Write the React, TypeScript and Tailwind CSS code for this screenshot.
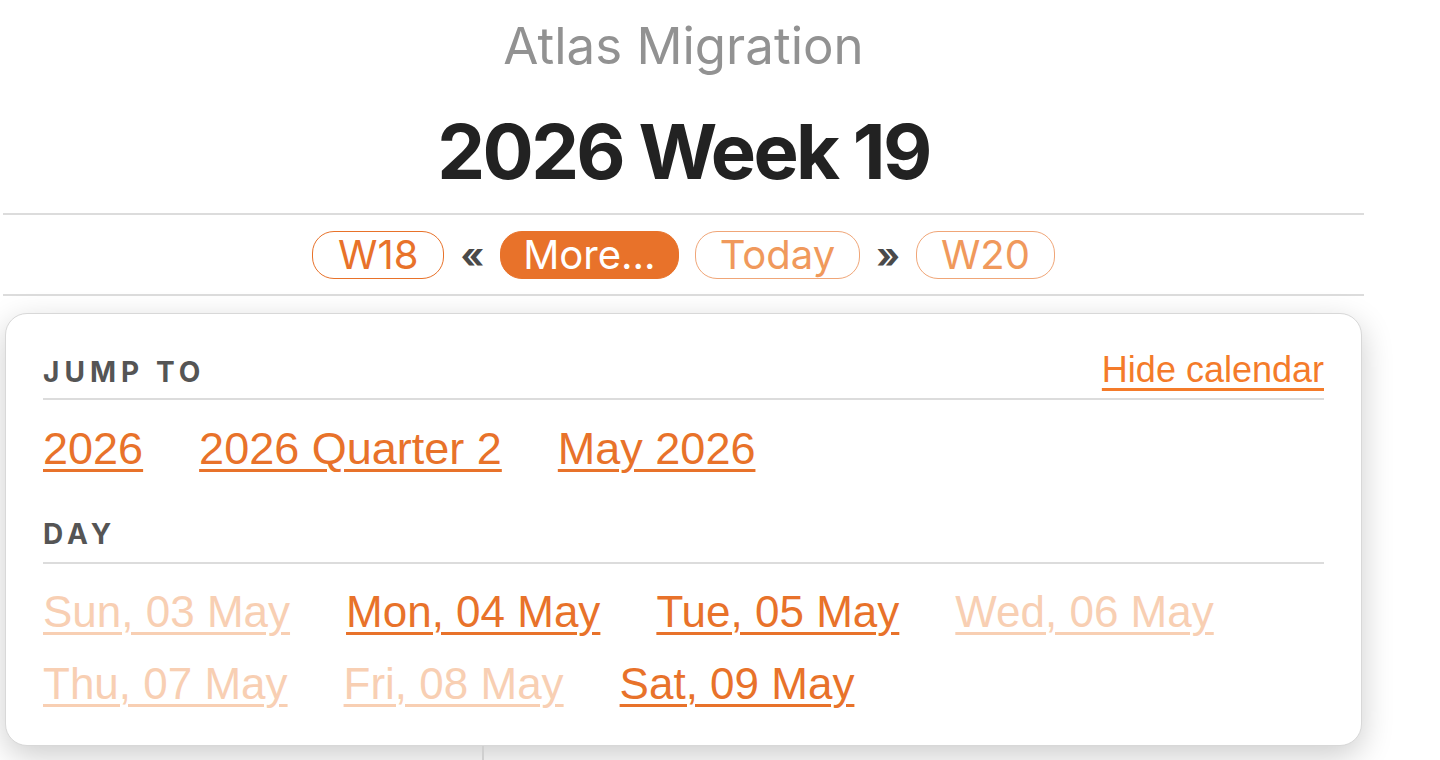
import React from "react";

const jumpLinks = ["2026", "2026 Quarter 2", "May 2026"];

const days = [
  { label: "Sun, 03 May", active: false },
  { label: "Mon, 04 May", active: true },
  { label: "Tue, 05 May", active: true },
  { label: "Wed, 06 May", active: false },
  { label: "Thu, 07 May", active: false },
  { label: "Fri, 08 May", active: false },
  { label: "Sat, 09 May", active: true },
];

function NavPill({
  children,
  variant,
}: {
  children: React.ReactNode;
  variant: "outline" | "solid" | "muted";
}) {
  const styles = {
    outline: "border-[#e8722a] px-[25px] text-[#e8722a]",
    solid: "border-[#e8722a] bg-[#e8722a] px-[22px] text-white",
    muted: "border-[#f0a678] px-[24px] text-[#f0995c]",
  }[variant];
  return (
    <button
      className={`h-[48px] rounded-[22px] border-[1.5px] text-[40px] leading-[44px] ${styles}`}
    >
      {children}
    </button>
  );
}

function SectionLabel({ children }: { children: React.ReactNode }) {
  return (
    <span className="font-['Inter',sans-serif] text-[28px] font-bold uppercase tracking-[0.18em] leading-[36px] text-[#555]">
      {children}
    </span>
  );
}

export default function App() {
  return (
    <div className="min-h-[760px] overflow-hidden bg-white font-['Inter',sans-serif]">
      <div className="ml-[3px] w-[1361px]">
        <header className="flex flex-col items-center">
          <div className="pt-[12px] text-[51px] leading-[68px] text-[#929292]">
            Atlas Migration
          </div>
          <h1 className="mt-[26px] text-[76px] font-bold leading-[90px] tracking-[-0.035em] text-[#222]">
            2026 Week 19
          </h1>
        </header>

        <nav className="mt-[17px] flex items-center justify-center gap-[16px] border-y-2 border-[#dcdcdc] pb-[12px] pt-[13px]">
          <NavPill variant="outline">W18</NavPill>
          <span className="text-[36px] font-bold text-[#4a4a4a]">«</span>
          <NavPill variant="solid">More...</NavPill>
          <NavPill variant="muted">Today</NavPill>
          <span className="text-[36px] font-bold text-[#4a4a4a]">»</span>
          <NavPill variant="muted">W20</NavPill>
        </nav>

        <section className="mx-[2px] mt-[17px] rounded-[22px] border border-[#d8d8d8] bg-white px-[37px] pb-[25px] pt-[36px] font-['Liberation_Sans',sans-serif] shadow-[0_10px_32px_rgba(0,0,0,0.2)]">
          <div className="flex items-end justify-between border-b-2 border-[#dcdcdc] pb-[8px]">
            <SectionLabel>Jump to</SectionLabel>
            <a
              href="#"
              className="text-[36px] leading-[40px] text-[#f47b2a] underline decoration-[3px] underline-offset-[6px]"
            >
              Hide calendar
            </a>
          </div>

          <div className="flex gap-x-[56px] pt-[16px]">
            {jumpLinks.map((l) => (
              <a
                key={l}
                href="#"
                className="text-[45px] leading-[66px] text-[#e8722a] underline decoration-[3px] underline-offset-[5px]"
              >
                {l}
              </a>
            ))}
          </div>

          <div className="mt-[34px] border-b-2 border-[#dcdcdc] pb-[10px]">
            <SectionLabel>Day</SectionLabel>
          </div>

          <div className="flex flex-wrap gap-x-[56px] pt-[12px]">
            {days.map((d) => (
              <a
                key={d.label}
                href="#"
                className={`text-[44px] leading-[72px] underline decoration-[3px] underline-offset-[5px] ${
                  d.active ? "text-[#e8722a]" : "text-[#f8cfb3]"
                }`}
              >
                {d.label}
              </a>
            ))}
          </div>
        </section>

        <div className="flex h-[40px]">
          <div className="w-[481px] border-r-2 border-[#cfcfcf]" />
        </div>
      </div>
    </div>
  );
}
